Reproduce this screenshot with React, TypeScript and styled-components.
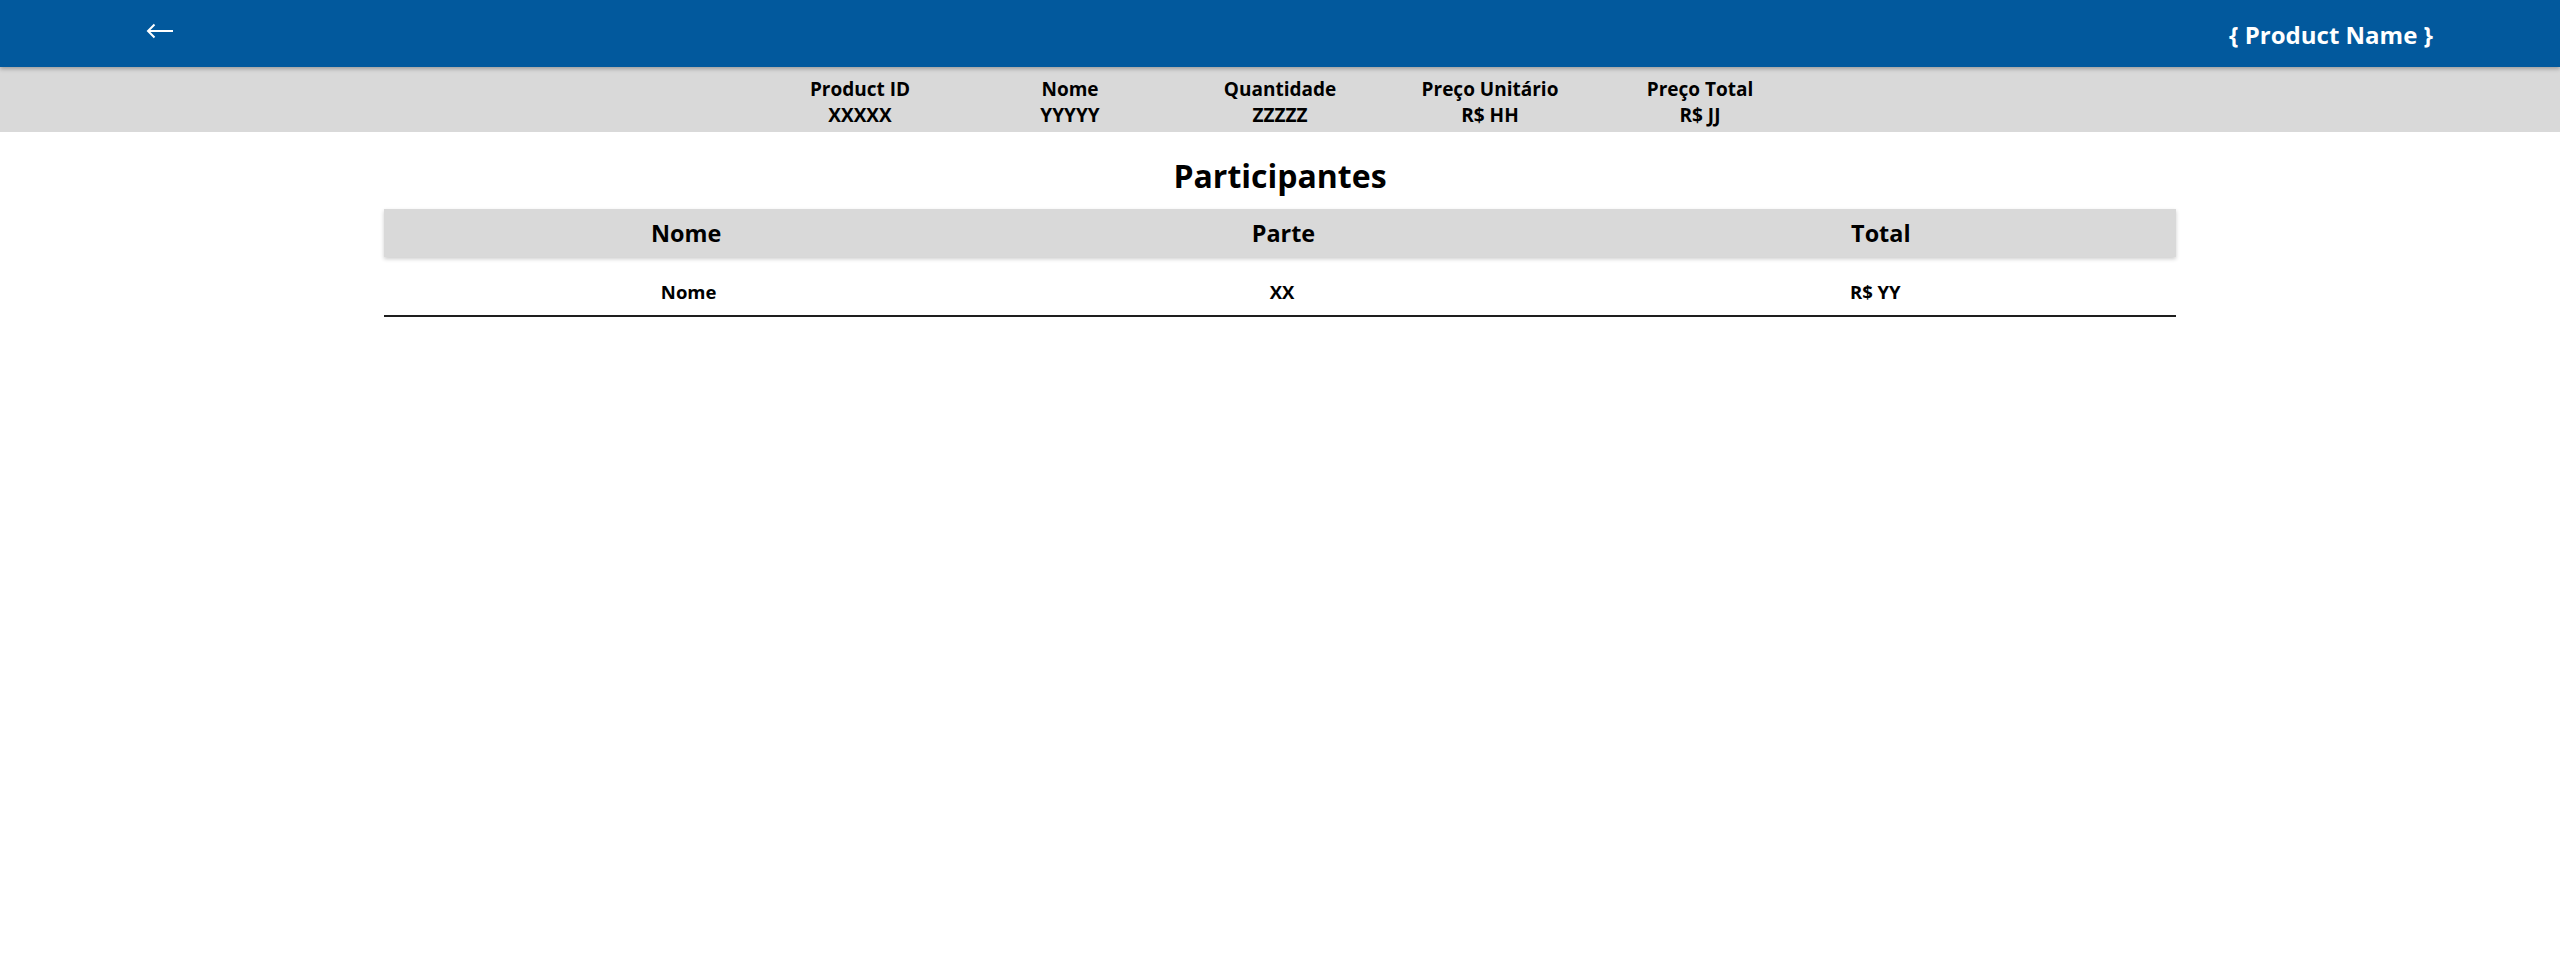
import React from "react";
import styled, { createGlobalStyle } from "styled-components";

const GlobalStyle = createGlobalStyle`
  html, body {
    margin: 0;
    padding: 0;
    background: #ffffff;
    font-family: "Open Sans", "Noto Sans", Arial, sans-serif;
    color: #000;
  }
  * { box-sizing: border-box; }
`;

const TopBar = styled.header`
  position: relative;
  z-index: 2;
  height: 67px;
  background: #02599d;
  display: flex;
  align-items: center;
  justify-content: space-between;
  padding: 0 127px 0 146px;
  box-shadow: 0 2px 4px rgba(0, 0, 0, 0.28);
`;

const BackButton = styled.button`
  background: none;
  border: none;
  padding: 0;
  margin-top: -6px;
  cursor: pointer;
  display: flex;
  align-items: center;
`;

const ProductTitle = styled.h1`
  margin: 0;
  font-size: 24px;
  font-weight: 700;
  color: #ffffff;
  line-height: normal;
  padding-top: 2px;
`;

const InfoBar = styled.section`
  background: #d9d9d9;
  height: 65px;
  padding-top: 9px;
  display: grid;
  grid-template-columns: repeat(5, 210px);
  justify-content: center;
`;

const InfoItem = styled.div`
  display: flex;
  flex-direction: column;
  align-items: center;
  font-size: 19px;
  font-weight: 700;
  line-height: normal;
`;

const SectionTitle = styled.h2`
  margin: 22px 0 12px;
  text-align: center;
  font-size: 32px;
  font-weight: 700;
  line-height: normal;
`;

const Table = styled.div`
  width: 70%;
  margin: 0 auto;
`;

const HeadRow = styled.div`
  display: grid;
  grid-template-columns: repeat(3, 1fr);
  align-items: center;
  height: 48px;
  background: #d9d9d9;
  box-shadow: 0 2px 4px rgba(0, 0, 0, 0.2);
`;

const HeadCell = styled.div`
  text-align: center;
  font-size: 23.4px;
  font-weight: 700;
  line-height: normal;
  padding-left: 7px;
`;

const BodyRow = styled.div`
  display: grid;
  grid-template-columns: repeat(3, 1fr);
  align-items: center;
  padding: 22px 6px 11px;
  border-bottom: 2px solid #1e1e1e;
`;

const BodyCell = styled.div`
  text-align: center;
  font-size: 18.5px;
  font-weight: 700;
  line-height: normal;
  padding-left: 4px;
`;

const info = [
  { label: "Product ID", value: "XXXXX" },
  { label: "Nome", value: "YYYYY" },
  { label: "Quantidade", value: "ZZZZZ" },
  { label: "Preço Unitário", value: "R$ HH" },
  { label: "Preço Total", value: "R$ JJ" },
];

export default function App() {
  return (
    <>
      <GlobalStyle />
      <TopBar>
        <BackButton aria-label="Voltar">
          <svg width="28" height="16" viewBox="0 0 28 16" fill="none">
            <path d="M27 8H2" stroke="#fff" strokeWidth="2" />
            <path d="M8.5 1.5L2 8l6.5 6.5" stroke="#fff" strokeWidth="2" />
          </svg>
        </BackButton>
        <ProductTitle>{"{ Product Name }"}</ProductTitle>
      </TopBar>
      <InfoBar>
        {info.map((i) => (
          <InfoItem key={i.label}>
            <span>{i.label}</span>
            <span>{i.value}</span>
          </InfoItem>
        ))}
      </InfoBar>
      <SectionTitle>Participantes</SectionTitle>
      <Table>
        <HeadRow>
          <HeadCell>Nome</HeadCell>
          <HeadCell>Parte</HeadCell>
          <HeadCell>Total</HeadCell>
        </HeadRow>
        <BodyRow>
          <BodyCell>Nome</BodyCell>
          <BodyCell>XX</BodyCell>
          <BodyCell>R$ YY</BodyCell>
        </BodyRow>
      </Table>
    </>
  );
}
